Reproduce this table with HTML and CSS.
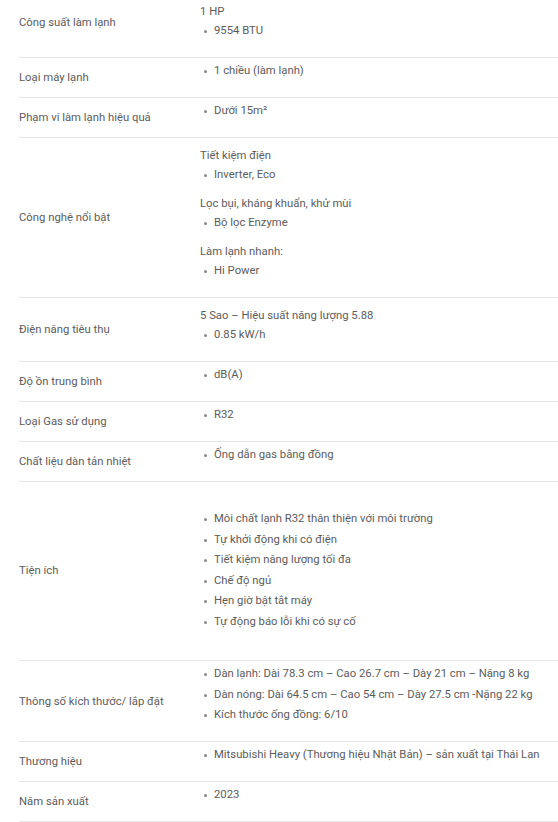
FILE: index.html
```html
<!DOCTYPE html>
<html lang="vi">
<head>
<meta charset="utf-8">
<title>Thông số kỹ thuật</title>
<link rel="stylesheet" href="styles.css">
</head>
<body>
<div class="specs">
  <div class="row row-first">
    <div class="label">Công suất làm lạnh</div>
    <div class="val">
      <p>1 HP</p>
      <ul><li>9554 BTU</li></ul>
    </div>
  </div>
  <div class="row">
    <div class="label">Loại máy lạnh</div>
    <div class="val"><ul><li>1 chiều (làm lạnh)</li></ul></div>
  </div>
  <div class="row">
    <div class="label">Phạm vi làm lạnh hiệu quả</div>
    <div class="val"><ul><li>Dưới 15m²</li></ul></div>
  </div>
  <div class="row">
    <div class="label">Công nghệ nổi bật</div>
    <div class="val">
      <p>Tiết kiệm điện</p>
      <ul><li>Inverter, Eco</li></ul>
      <p>Lọc bụi, kháng khuẩn, khử mùi</p>
      <ul><li>Bộ lọc Enzyme</li></ul>
      <p>Làm lạnh nhanh:</p>
      <ul><li>Hi Power</li></ul>
    </div>
  </div>
  <div class="row">
    <div class="label">Điện năng tiêu thụ</div>
    <div class="val">
      <p>5 Sao – Hiệu suất năng lượng 5.88</p>
      <ul><li>0.85 kW/h</li></ul>
    </div>
  </div>
  <div class="row">
    <div class="label">Độ ồn trung bình</div>
    <div class="val"><ul><li>dB(A)</li></ul></div>
  </div>
  <div class="row">
    <div class="label">Loại Gas sử dụng</div>
    <div class="val"><ul><li>R32</li></ul></div>
  </div>
  <div class="row">
    <div class="label">Chất liệu dàn tản nhiệt</div>
    <div class="val"><ul><li>Ống dẫn gas bằng đồng</li></ul></div>
  </div>
  <div class="row row-roomy">
    <div class="label">Tiện ích</div>
    <div class="val">
      <ul>
        <li>Môi chất lạnh R32 thân thiện với môi trường</li>
        <li>Tự khởi động khi có điện</li>
        <li>Tiết kiệm năng lượng tối đa</li>
        <li>Chế độ ngủ</li>
        <li>Hẹn giờ bật tắt máy</li>
        <li>Tự động báo lỗi khi có sự cố</li>
      </ul>
    </div>
  </div>
  <div class="row">
    <div class="label">Thông số kích thước/ lắp đặt</div>
    <div class="val">
      <ul>
        <li>Dàn lạnh: Dài 78.3 cm – Cao 26.7 cm – Dày 21 cm – Nặng 8 kg</li>
        <li>Dàn nóng: Dài 64.5 cm – Cao 54 cm – Dày 27.5 cm -Nặng 22 kg</li>
        <li>Kích thước ống đồng: 6/10</li>
      </ul>
    </div>
  </div>
  <div class="row">
    <div class="label">Thương hiệu</div>
    <div class="val"><ul><li>Mitsubishi Heavy (Thương hiệu Nhật Bản) – sản xuất tại Thái Lan</li></ul></div>
  </div>
  <div class="row">
    <div class="label">Năm sản xuất</div>
    <div class="val"><ul><li>2023</li></ul></div>
  </div>
</div>
</body>
</html>
```
FILE: styles.css
```css
html, body {
  margin: 0;
  padding: 0;
  background: #ffffff;
}

body {
  font-family: Roboto, "Liberation Sans", Arial, sans-serif;
  font-size: 11.3px;
  color: #5c5c5c;
  overflow: hidden;
}

.specs {
  margin: -12px 0 0 19px;
}

.row {
  display: grid;
  grid-template-columns: 181px 1fr;
  border-bottom: 1px solid #e6e6e6;
}

.label {
  align-self: center;
  line-height: 19px;
  white-space: nowrap;
}

.val {
  padding: 3px 0 7px;
  white-space: nowrap;
}

.val p {
  margin: 5px 0 0;
  line-height: 19px;
}

.val ul {
  list-style: none;
  margin: 0 0 10px;
  padding: 0;
}

.val li {
  position: relative;
  padding-left: 14px;
  line-height: 19px;
}

.val li + li {
  margin-top: 1.6px;
}

.val li::before {
  content: "";
  position: absolute;
  left: 4px;
  top: 9px;
  width: 3px;
  height: 3px;
  border-radius: 50%;
  background: #888888;
}

.row-first .val {
  padding-top: 9px;
}

.row-roomy .val {
  padding: 27px 0 19px;
}
```
